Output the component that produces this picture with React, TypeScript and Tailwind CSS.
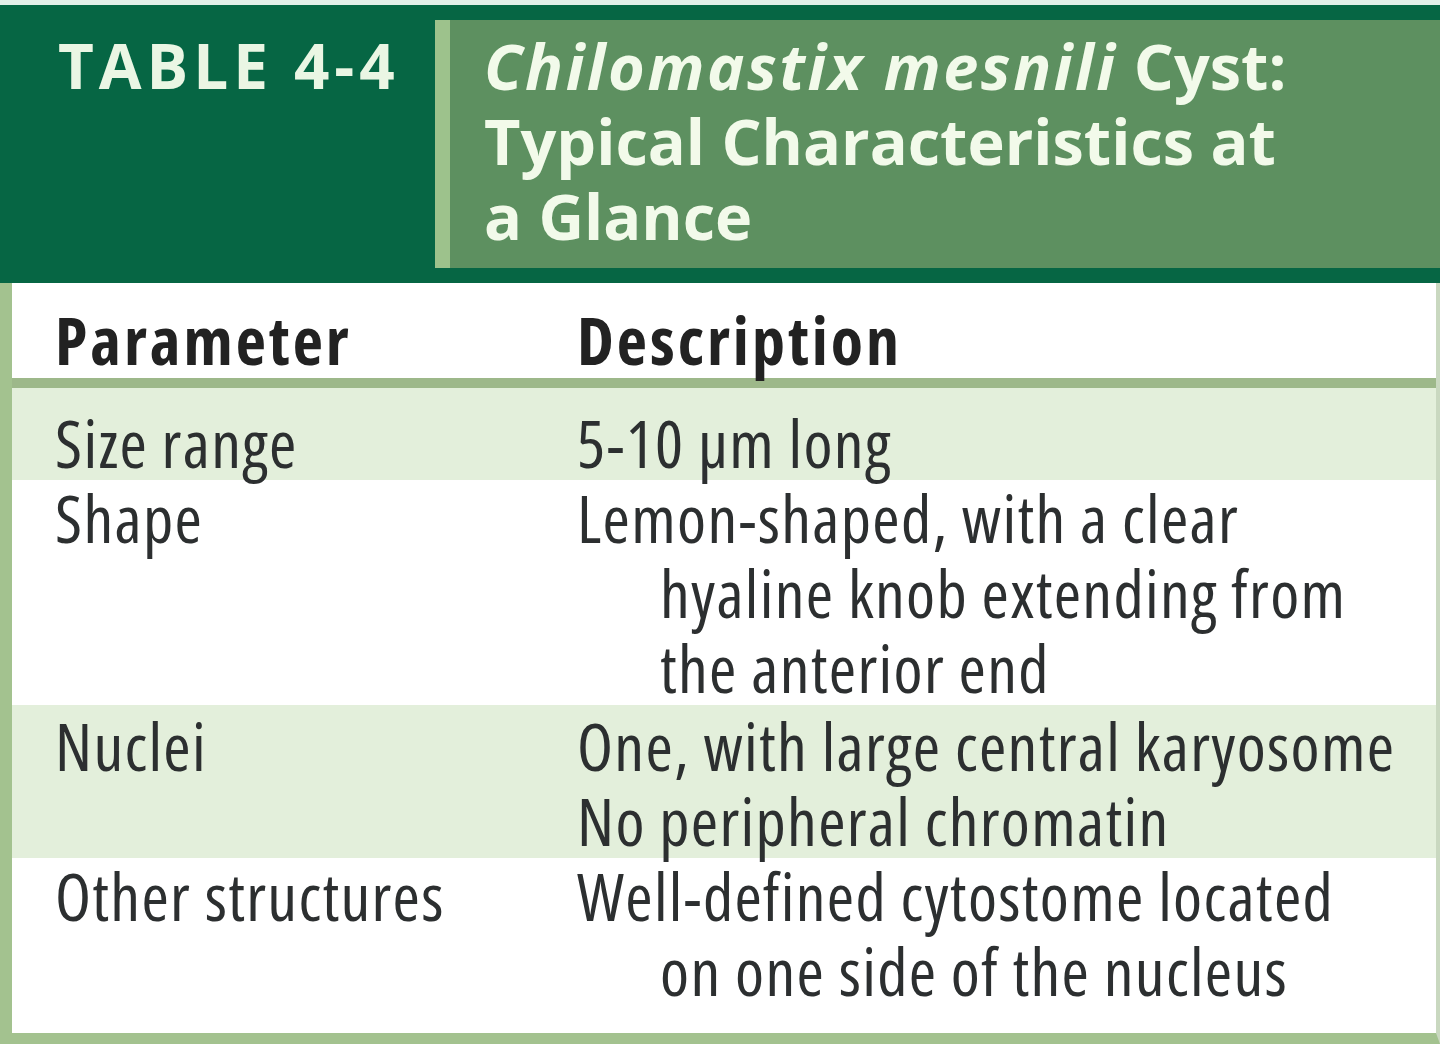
export default function App() {
  const body = "font-['Open_Sans',sans-serif]";
  const rows = [
    { param: "Size range", lines: [["5-10 µm long", false]], bg: "bg-[#e3efdb]", pad: "pt-[17px]" },
    {
      param: "Shape",
      lines: [
        ["Lemon-shaped, with a clear", false],
        ["hyaline knob extending from", true],
        ["the anterior end", true],
      ],
      bg: "bg-white",
      pad: "",
    },
    {
      param: "Nuclei",
      lines: [
        ["One, with large central karyosome", false],
        ["No peripheral chromatin", false],
      ],
      bg: "bg-[#e3efdb]",
      pad: "pt-[3px]",
    },
    {
      param: "Other structures",
      lines: [
        ["Well-defined cytostome located", false],
        ["on one side of the nucleus", true],
      ],
      bg: "bg-white",
      pad: "pb-[25px]",
    },
  ] as const;

  return (
    <div className="w-[1440px] h-[1044px] bg-[#e2efe8] pt-[5px] overflow-hidden">
      <div className="flex bg-[#066644] py-[15px] h-[278px]">
        <div className="w-[435px] pl-[58px] pt-[8px] text-[62px] leading-[75px] font-bold tracking-[0.08em] text-[#eaf6e4] font-['Open_Sans',sans-serif]">
          TABLE 4-4
        </div>
        <div className="flex-1 border-l-[15px] border-[#9dc28c] bg-[#5d9060] pl-[34px] pt-[8px] text-[63px] leading-[75px] font-bold text-[#f2faea] font-['Open_Sans',sans-serif]">
          <div>
            <i className="tracking-[0.04em]">Chilomastix mesnili</i> Cyst:
          </div>
          <div>Typical Characteristics at</div>
          <div>a Glance</div>
        </div>
      </div>

      <div className={`border-l-[12px] border-r-[4px] border-b-[11px] border-[#a3c28f] border-r-[#c9d8c0] bg-white text-[#2c2f30] ${body}`}>
        <div className="flex h-[105px] items-center pt-[18px] border-b-[10px] border-[#9db88a] text-[66px] leading-[75px] font-bold font-stretch-condensed tracking-[0.045em] text-[#222]">
          <div className="w-[565px] pl-[43px]">Parameter</div>
          <div>Description</div>
        </div>
        {rows.map((r) => (
          <div key={r.param} className={`flex ${r.bg} ${r.pad} text-[66px] leading-[75px] font-stretch-condensed tracking-[0.02em] whitespace-nowrap`}>
            <div className="w-[565px] pl-[43px] shrink-0">{r.param}</div>
            <div>
              {r.lines.map(([t, indent]) => (
                <div key={t} className={indent ? "pl-[83px]" : ""}>
                  {t}
                </div>
              ))}
            </div>
          </div>
        ))}
      </div>
    </div>
  );
}
